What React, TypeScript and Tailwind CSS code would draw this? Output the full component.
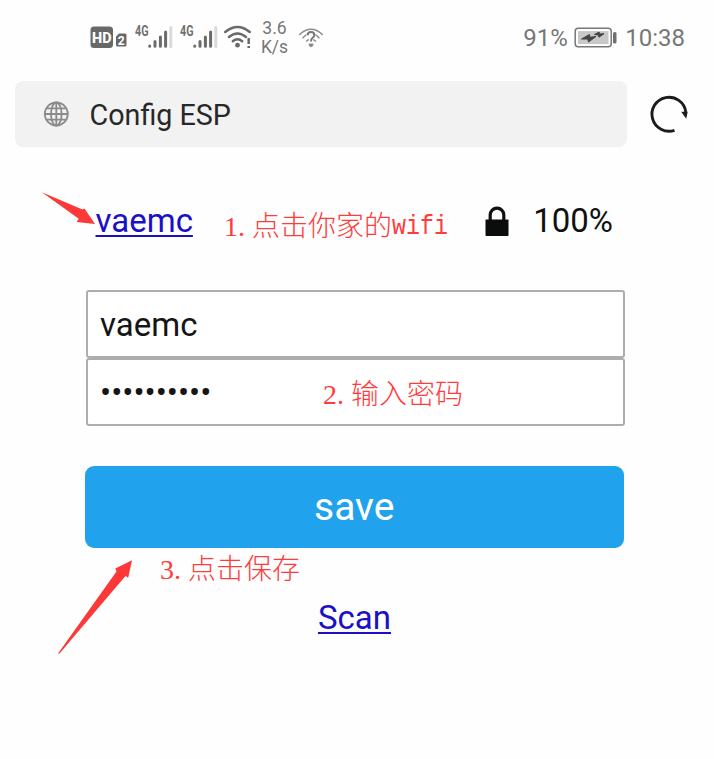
import React from "react";

function Signal() {
  return (
    <svg className="block h-[28px] w-[38px]" viewBox="0 0 38 28">
      <text x="0" y="12" fontSize="14.5" fontWeight="700" fill="#707070" textLength="13.5" lengthAdjust="spacingAndGlyphs">4G</text>
      <g strokeWidth="3" strokeLinecap="round" stroke="#6b6b6b">
        <path d="M14.7 22v.3M20 17.500v4.800M25.400 13v9.300M30.600 8v14.300" />
        <path d="M35.800 3.500v19" stroke="#dadada" />
      </g>
    </svg>
  );
}

function StatusBar() {
  return (
    <header className="flex h-[75px] items-center pl-[90px] text-[#777]">
      <svg className="block h-[28px] w-[38px] shrink-0" viewBox="0 0 38 28">
        <rect x=".5" y="2.500" width="22.500" height="21.500" rx="3.500" fill="#686868" />
        <text x="2" y="18.700" fontSize="15.500" fontWeight="800" fill="#fff" textLength="19.500" lengthAdjust="spacingAndGlyphs">HD</text>
        <path d="M29 9.500h6q1.500 0 1.500 1.500V21q0 1.500-1.500 1.500h-7.500Q26 22.500 26 21v-8.500z" fill="#686868" />
        <text x="27.700" y="20.500" fontSize="12" fontWeight="700" fill="#fff">2</text>
      </svg>
      <div className="ml-[7px]"><Signal /></div>
      <div className="ml-[7px]"><Signal /></div>
      <svg className="ml-[4.500px] block h-[28px] w-[30px] shrink-0" viewBox="0 0 30 28" fill="none" stroke="#696969">
        <path d="M2.200 8Q14.500-2 26.800 8M6 13Q14.500 5.800 23 13M9.800 17.200Q14.500 13.500 19.200 17.200" strokeWidth="2.400" strokeLinecap="round" />
        <circle cx="14.500" cy="21.200" r="2.400" fill="#696969" stroke="none" />
        <path d="M25.700 14v6M25.700 22v2" strokeWidth="2.500" />
      </svg>
      <div className="ml-[8px] w-[28px] text-center text-[17.500px] leading-[19px]">
        <div>3.6</div>
        <div>K/s</div>
      </div>
      <svg className="ml-[9.500px] block h-[24px] w-[26px] shrink-0" viewBox="0 0 26 24" fill="none" stroke="#8c8c8c" strokeWidth="1.500">
        <path d="M1.700 8.500Q13-2 24.300 8.500M5 11.800Q6.500 10 8 9M21 11.800Q19.500 10 18 9M8.500 15l1.800-1.200M17.500 15l-1.800-1.200" strokeLinecap="round" />
        <path d="M9.700 9.300Q9.700 6 13 6T16.300 9Q16.300 10.800 14.400 12Q13 13 13 15.500" stroke="#777" strokeWidth="2" />
        <path d="M11 18h4v1.500l-2 1.500-2-1.500z" fill="#888" strokeWidth=".8" />
      </svg>
      <div className="ml-auto mr-[29px] flex items-center text-[24px] leading-[28px]">
        <span>91%</span>
        <svg className="ml-[6.500px] mr-[7px] block h-[22px] w-[44px]" viewBox="0 0 44 22">
          <rect x="1.200" y="1.300" width="36" height="18.500" rx="3" fill="#fff" stroke="#777" strokeWidth="1.500" />
          <rect x="4" y="4.100" width="30.500" height="13" fill="#c8c8c8" />
          <path d="M7.500 12l8-4.500.5 2.800 6-.8-7.500 5.500-.8-3z" fill="#444" stroke="#444" />
          <path d="M20.500 7.500l4.500-2.500.8 2 4.200-.3-5 3.500-.8-2.200z" fill="#444" stroke="#444" />
          <rect x="39" y="5" width="3.500" height="11.500" rx="1.500" fill="#707070" />
        </svg>
        <span>10:38</span>
      </div>
    </header>
  );
}

function AddressBar() {
  return (
    <div className="mt-[6px] flex h-[66px] items-center pl-[15px]">
      <div className="flex h-full w-[612px] items-center rounded-[8px] bg-[#f2f2f2] pl-[28px]">
        <svg className="block h-[26px] w-[26px]" viewBox="0 0 26 26" fill="none" stroke="#8b8b8b" strokeWidth="1.800">
          <circle cx="13.300" cy="13" r="11.500" />
          <ellipse cx="13.300" cy="13" rx="5.300" ry="11.500" />
          <path d="M13.300 1.300v23.400M1.600 13H25M3.800 7.300h19M3.800 18.700h19" />
        </svg>
        <h1 className="ml-[20.500px] pt-px text-[28.700px] leading-[34px] text-[#282828]">Config ESP</h1>
      </div>
      <svg className="ml-[21px] block h-[42px] w-[42px]" viewBox="0 0 42 42">
        <path d="M26.500 37.300A17 17 0 1 1 37.800 19" fill="none" stroke="#1c1c1c" strokeWidth="2.900" />
        <path d="M33.200 18.700h6.500l-1.500 7z" fill="#1c1c1c" />
      </svg>
    </div>
  );
}

const link = "text-[#1a10c8] underline decoration-[2px] underline-offset-[3px]";
const field = "h-[68px] rounded-[3px] border-2 border-[#adadad] bg-white pl-[12px] pt-px text-[33px] leading-[64px] text-[#151515]";
const note = "absolute flex whitespace-pre text-[28px] font-light leading-[32px] text-[#ff3b3b]";

function StepNumber({ value }: { value: string }) {
  return (
    <span className="w-[28px] font-['Liberation_Serif',serif] font-normal">{value}.</span>
  );
}

function Notes() {
  return (
    <>
      <p className={note + " left-[224px] top-[211px]"}>
        <StepNumber value="1" />
        <span>点击你家的</span>
        <span className="origin-left scale-x-[0.833] font-['Liberation_Mono',monospace] font-normal">wifi</span>
      </p>
      <p className={note + " left-[323px] top-[379px]"}>
        <StepNumber value="2" />
        <span>输入密码</span>
      </p>
      <p className={note + " left-[160px] top-[554px]"}>
        <StepNumber value="3" />
        <span>点击保存</span>
      </p>
      <svg className="absolute left-[40px] top-[190px] h-[36px] w-[56px]" viewBox="40 190 56 36">
        <path d="M41.800 192.200L82.500 209.500 84.500 208.500 95 224 76.500 222 78.800 218.800z" fill="#fc3838" />
      </svg>
      <svg className="absolute left-[56px] top-[558px] h-[98px] w-[78px]" viewBox="56 558 78 98">
        <path d="M58 653.500L116.500 571.500 115.300 568.500 132 560.200 128.200 577.700 125.500 576 59.500 653.500z" fill="#fc3838" />
      </svg>
    </>
  );
}

export default function App() {
  return (
    <div className="relative h-[759px] w-[714px] overflow-hidden bg-[#fefefe] font-[Roboto,'Noto_Sans_CJK_SC',sans-serif]">
      <StatusBar />
      <AddressBar />
      <main className="ml-[85px] w-[540px]">
        <div className="mt-[54px] flex h-[40px] items-center pl-[10.500px] text-[33px] leading-[40px] text-[#111]">
          <a className={link}>vaemc</a>
          <svg className="ml-auto block h-[30px] w-[25px]" viewBox="0 0 25 30">
            <path d="M5.200 14V9a6.800 6.800 0 0 1 13.600 0V14" fill="none" stroke="#111" strokeWidth="3.200" />
            <rect x=".5" y="13.500" width="23" height="16.500" rx=".8" fill="#0b0d0d" />
          </svg>
          <span className="ml-[23px] mr-[12px]">100%</span>
        </div>
        <div className="mt-[49px] pl-px">
          <div className={field}>vaemc</div>
          <div className={field}>••••••••••</div>
        </div>
        <button className="mt-[39.500px] block h-[82.500px] w-[538.500px] rounded-[9px] bg-[#21a2ec] text-[39px] leading-[80px] text-white">save</button>
        <div className="mt-[50px] w-[539px] text-center text-[33px] leading-[40px]">
          <a className={link}>Scan</a>
        </div>
      </main>
      <Notes />
    </div>
  );
}
